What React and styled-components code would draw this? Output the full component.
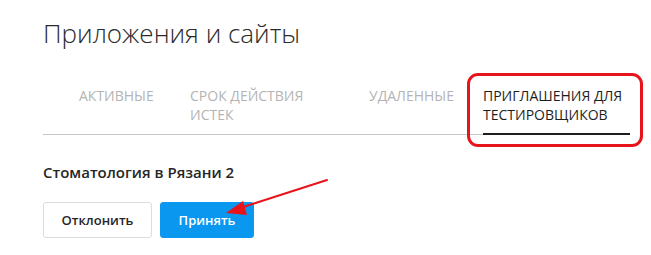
import React from 'react';
import styled, { createGlobalStyle } from 'styled-components';

const GlobalStyle = createGlobalStyle`
  html, body {
    margin: 0;
    padding: 0;
    background: #ffffff;
  }
  body {
    font-family: 'Open Sans', 'Liberation Sans', sans-serif;
    color: #222;
  }
`;

const Page = styled.div`
  position: relative;
  width: 651px;
  height: 255px;
  padding-left: 43px;
  box-sizing: border-box;
  overflow: hidden;
`;

const Title = styled.h1`
  margin: 14px 0 0;
  font-size: 26px;
  line-height: 38px;
  font-weight: 300;
  color: #2b2b2b;
`;

const TabBar = styled.div`
  display: flex;
  align-items: flex-start;
  width: 587px;
  margin-top: 34px;
  padding-left: 36px;
  box-sizing: border-box;
  border-bottom: 1px solid #c6c6c6;
`;

const Tab = styled.div`
  width: ${({ $width }) => $width}px;
  box-sizing: border-box;
  padding-bottom: 9px;
  font-size: 14px;
  line-height: 19px;
  text-transform: uppercase;
  color: ${({ $active }) => ($active ? '#1e1e1e' : '#b4b4b4')};
  ${({ $active }) => $active && `
    border-bottom: 2px solid #1e1e1e;
    margin-bottom: -1px;
  `}
`;

const TabLabel = styled.span`
  display: block;
  max-width: ${({ $max }) => ($max ? `${$max}px` : 'none')};
`;

const AppName = styled.div`
  margin-top: 27px;
  font-size: 15px;
  line-height: 20px;
  font-weight: 600;
  color: #262626;
`;

const Actions = styled.div`
  display: flex;
  gap: 8px;
  margin-top: 20px;
`;

const Button = styled.button`
  width: ${({ $width }) => $width}px;
  height: 36px;
  padding: 0;
  border-radius: 3px;
  font-family: 'Open Sans', 'Liberation Sans', sans-serif;
  font-size: 13px;
  font-weight: 600;
  cursor: pointer;
  border: 1px solid ${({ $primary }) => ($primary ? '#0a97ef' : '#dcdcdc')};
  background: ${({ $primary }) => ($primary ? '#0a97ef' : '#ffffff')};
  color: ${({ $primary }) => ($primary ? '#ffffff' : '#262626')};
`;

const Highlight = styled.div`
  position: absolute;
  left: 467px;
  top: 73px;
  width: 176px;
  height: 74px;
  box-sizing: border-box;
  border: 3px solid #e8141b;
  border-radius: 11px;
  pointer-events: none;
`;

const Arrow = styled.svg`
  position: absolute;
  left: 0;
  top: 0;
  pointer-events: none;
`;

const tabs = [
  { label: 'Активные', width: 111 },
  { label: 'Срок действия истек', width: 179, max: 140 },
  { label: 'Удаленные', width: 114 },
  { label: 'Приглашения для тестировщиков', width: 147, active: true },
];

export default function App() {
  return (
    <>
      <GlobalStyle />
      <Page>
        <Title>Приложения и сайты</Title>
        <TabBar>
          {tabs.map((t) => (
            <Tab key={t.label} $width={t.width} $active={t.active}>
              <TabLabel $max={t.max}>{t.label}</TabLabel>
            </Tab>
          ))}
        </TabBar>
        <AppName>Стоматология в Рязани 2</AppName>
        <Actions>
          <Button $width={109}>Отклонить</Button>
          <Button $primary $width={94}>Принять</Button>
        </Actions>

        <Highlight />
        <Arrow width="651" height="255" viewBox="0 0 651 255">
          <line x1="327" y1="180" x2="240" y2="208" stroke="#e8141b" strokeWidth="2" strokeLinecap="round" />
          <polygon points="226,213 243,201 247,215" fill="#e8141b" />
        </Arrow>
      </Page>
    </>
  );
}
